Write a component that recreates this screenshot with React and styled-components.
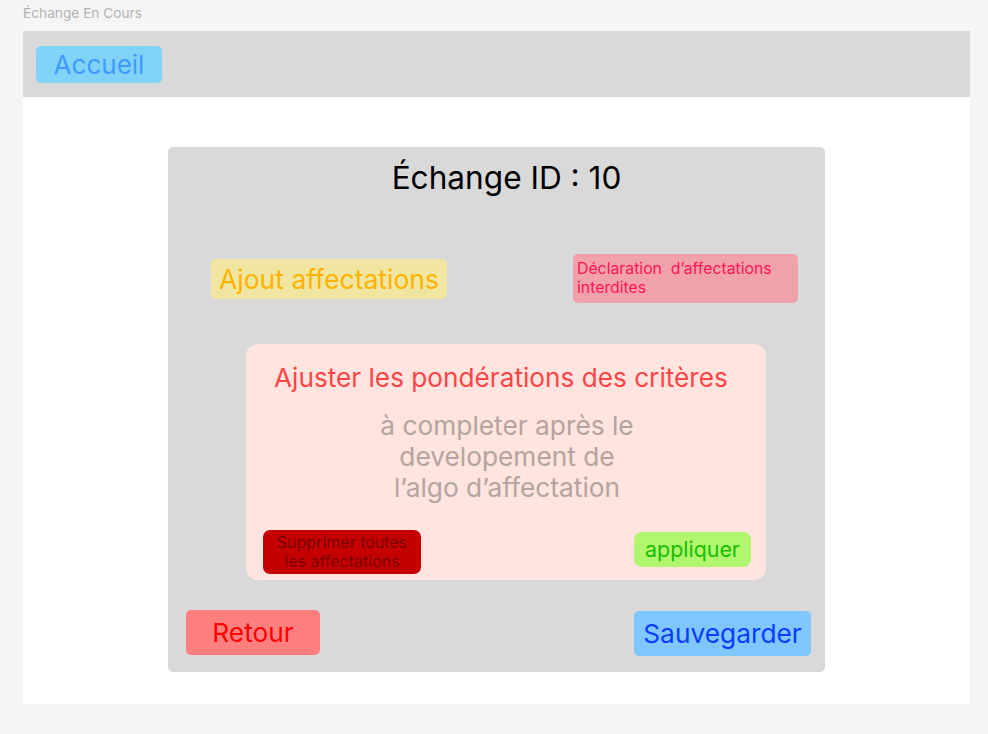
import styled, { createGlobalStyle } from "styled-components";

const GlobalStyle = createGlobalStyle`
  html, body {
    margin: 0;
    padding: 0;
    background: #f5f5f5;
    font-family: Inter, "Noto Sans", sans-serif;
  }
  button {
    font-family: inherit;
    border: none;
    cursor: pointer;
  }
`;

const Page = styled.div`
  width: 988px;
  height: 734px;
  padding-left: 23px;
  box-sizing: border-box;
`;

const FrameLabel = styled.div`
  height: 31px;
  font-size: 13.7px;
  line-height: 26px;
  color: #b3b3b3;
`;

const Frame = styled.div`
  width: 947px;
  height: 673px;
  background: #ffffff;
  display: flex;
  flex-direction: column;
`;

const TopBar = styled.div`
  height: 66px;
  background: #d9d9d9;
  display: flex;
  align-items: center;
  padding-left: 13px;
`;

const NavButton = styled.button`
  width: 126px;
  height: 37px;
  border-radius: 5px;
  background: #80d3f7;
  color: #3f9bff;
  font-size: 26px;
  padding: 0;
`;

const Card = styled.div`
  width: 657px;
  height: 525px;
  margin: 50px 0 0 145px;
  background: #d9d9d9;
  border-radius: 5px;
  display: flex;
  flex-direction: column;
  box-sizing: border-box;
  padding-top: 12px;
`;

const Title = styled.h1`
  margin: 0;
  padding-left: 20px;
  text-align: center;
  font-size: 31.6px;
  line-height: 38px;
  font-weight: 400;
  color: #000;
`;

const Row = styled.div`
  display: flex;
  justify-content: space-between;
  align-items: ${(p) => p.align || "center"};
  margin: ${(p) => p.margin};
`;

const Action = styled.button`
  width: ${(p) => p.w}px;
  height: ${(p) => p.h}px;
  background: ${(p) => p.bg};
  color: ${(p) => p.fg};
  font-size: ${(p) => p.size}px;
  line-height: ${(p) => p.lh || 1.2};
  border-radius: ${(p) => p.radius || 5}px;
  text-align: ${(p) => p.textAlign || "center"};
  padding: ${(p) => p.pad || "0"};
  margin-top: ${(p) => p.mt || 0}px;
  white-space: ${(p) => (p.nowrap ? "nowrap" : "normal")};
`;

const Panel = styled.div`
  width: 520px;
  height: 236px;
  margin: 41px 0 0 78px;
  background: #ffe4df;
  border-radius: 12px;
  display: flex;
  flex-direction: column;
  box-sizing: border-box;
  padding: 19px 15px 6px 17px;
`;

const PanelTitle = styled.h2`
  margin: 0 0 0 11px;
  font-size: 26.2px;
  line-height: 30px;
  font-weight: 400;
  color: #ff4545;
  white-space: nowrap;
`;

const Placeholder = styled.p`
  margin: 17px 0 0;
  text-align: center;
  font-size: 26.3px;
  line-height: 31px;
  color: #b5a3a0;
`;

const PanelFooter = styled.div`
  margin-top: auto;
  display: flex;
  justify-content: space-between;
  align-items: flex-start;
`;

export default function App() {
  return (
    <>
      <GlobalStyle />
      <Page>
        <FrameLabel>Échange En Cours</FrameLabel>
        <Frame>
          <TopBar>
            <NavButton>Accueil</NavButton>
          </TopBar>
          <Card>
            <Title>Échange ID : 10</Title>
            <Row margin="57px 27px 0 43px">
              <Action w={236} h={40} bg="#f0e6a1" fg="#ffb300" size={26.5} pad="2px 0 0" nowrap>
                Ajout affectations
              </Action>
              <Action
                w={225}
                h={49}
                bg="#f0a1a9"
                fg="#ff1458"
                size={15.8}
                textAlign="left"
                pad="0 4px"
              >
                Déclaration&nbsp; d’affectations interdites
              </Action>
            </Row>
            <Panel>
              <PanelTitle>Ajuster les pondérations des critères</PanelTitle>
              <Placeholder>
                à completer après le
                <br />
                developement de
                <br />
                l’algo d’affectation
              </Placeholder>
              <PanelFooter>
                <Action w={158} h={44} bg="#c50000" fg="#7a0000" size={16} lh={1.2} radius={7}>
                  Supprimer toutes
                  <br />
                  les affectations
                </Action>
                <Action w={117} h={35} bg="#b2f56f" fg="#16c000" size={21.4} radius={8} mt={2}>
                  appliquer
                </Action>
              </PanelFooter>
            </Panel>
            <Row margin="30px 14px 0 18px" align="flex-start">
              <Action w={134} h={45} bg="#ff7f7f" fg="#ff0000" size={26.3}>
                Retour
              </Action>
              <Action w={177} h={45} bg="#80c6ff" fg="#0a3cff" size={26.3} mt={1} nowrap>
                Sauvegarder
              </Action>
            </Row>
          </Card>
        </Frame>
      </Page>
    </>
  );
}
